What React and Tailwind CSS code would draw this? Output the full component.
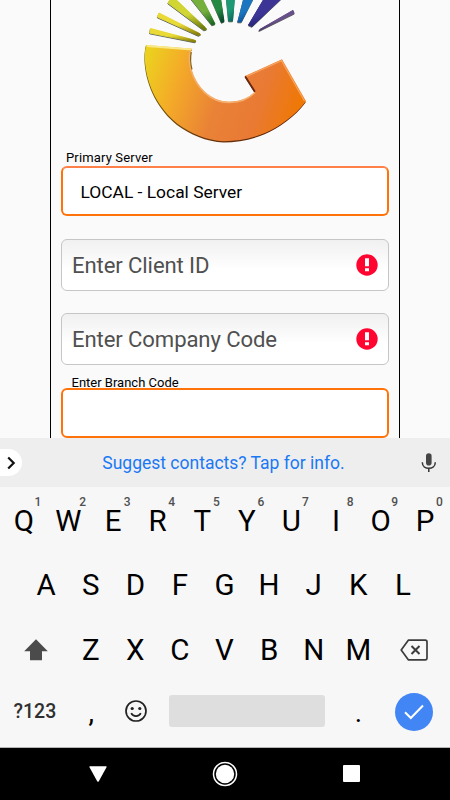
const topRow = [
  ['Q', '1'], ['W', '2'], ['E', '3'], ['R', '4'], ['T', '5'],
  ['Y', '6'], ['U', '7'], ['I', '8'], ['O', '9'], ['P', '0'],
];

const rays = [
  { d: 'M150.5 28.5 L149.8 33 L195 42 L196 41 L194 40 Z', fill: 'url(#yellow)' },
  { d: 'M159 13 L157.5 17 L198.5 35.5 L200.5 34.5 L199 33.2 Z', fill: 'url(#yellow)' },
  { d: 'M171 -2 L168 3 L204 30 L206.5 29.3 L205.5 27.7 L177 0.5 Z', fill: 'url(#lime)' },
  { d: 'M190.5 -2 L212 25 L215 24 L202 -2 Z', fill: 'url(#green)' },
  { d: 'M211 -2 L221.5 22.5 L224 21.5 L220.5 -2 Z', fill: 'url(#forest)' },
  { d: 'M226.5 -2 L228.7 21 L232.5 21 L234.5 -2 Z', fill: 'url(#teal)' },
  { d: 'M244 -2 L237.8 22 L241.3 22 L253.5 -2 Z', fill: 'url(#blue)' },
  { d: 'M264.5 -2 L248.5 25 L252 26.5 L282 -2 Z', fill: 'url(#indigo)' },
  { d: 'M293 10.3 L294.2 13.4 L260 30.3 L259 30.6 L260 29.3 Z', fill: 'url(#purple)' },
];

const gradients = [
  ['yellow', '#e9da35', '#8c8208'],
  ['lime', '#d2d632', '#6c7c0a'],
  ['green', '#76b03c', '#1c6b22'],
  ['forest', '#258a41', '#07482c'],
  ['teal', '#1c9a74', '#06665c'],
  ['blue', '#1a76c0', '#0a3f86'],
  ['indigo', '#3c3596', '#191a66'],
  ['purple', '#69508a', '#2c1a50'],
];

const body =
  'M146 45 L192.3 48.7 C189 53 189.3 63 191.5 69.5 C196 86 210 101.7 229 101.7 C240 101.7 249 98 255 91.7 L245 76 L282 59.3 L306 101.3 C296 115 279 127 265 133 C252 138.5 238 141.2 224 141.2 C207 140.8 190 133 177 123.5 C159 108.5 147 87 145 62 C144.6 56 145 50 146 45 Z';

function Logo() {
  return (
    <svg width="328" height="150" viewBox="61 0 328 150" className="block shrink-0">
      <defs>
        <linearGradient id="body" gradientUnits="userSpaceOnUse" x1="148" y1="55" x2="300" y2="105">
          <stop offset="0" stopColor="#ecd01f" />
          <stop offset="0.22" stopColor="#f4ab28" />
          <stop offset="0.5" stopColor="#e98236" />
          <stop offset="0.75" stopColor="#e97a35" />
          <stop offset="1" stopColor="#ef7805" />
        </linearGradient>
        <linearGradient id="rim" gradientUnits="userSpaceOnUse" x1="145" y1="0" x2="306" y2="0">
          <stop offset="0" stopColor="#6b5a05" />
          <stop offset="0.35" stopColor="#6e360a" />
          <stop offset="1" stopColor="#541a05" />
        </linearGradient>
        {gradients.map(([id, from, to]) => (
          <linearGradient key={id} id={id} x1="0.35" y1="0" x2="0.75" y2="1">
            <stop offset="0" stopColor={from} />
            <stop offset="0.5" stopColor={from} />
            <stop offset="1" stopColor={to} />
          </linearGradient>
        ))}
      </defs>
      {rays.map((r) => (
        <g key={r.d} strokeWidth="1" strokeLinejoin="round">
          <path d={r.d} fill="#23301c" stroke="#23301c" opacity="0.7" transform="translate(-0.2 0.8)" />
          <path d={r.d} fill={r.fill} stroke={r.fill} />
        </g>
      ))}
      <path d={body} fill="url(#rim)" transform="translate(-0.4 1.3)" />
      <path d={body} fill="url(#body)" />
      {/* bevel */}
      <path d="M147 46 L191.5 49.5" stroke="#f8e88a" strokeWidth="1.8" fill="none" />
      <path d="M190.3 51 C188.5 58 190 66 191 70 C196 87 210 102.5 229 102.5 C240 102.5 249 98.7 255 92.5" stroke="#f5b070" strokeWidth="1.5" fill="none" />
      <path d="M191.3 52 C189.8 59 190.8 65 192 69.5" stroke="#85600f" strokeWidth="1.2" fill="none" />
      <path d="M246 76.7 L281.5 60.7 L304.5 101" stroke="#f7a25c" strokeWidth="1.4" fill="none" />
      <path d="M245.2 76.3 L255 91.7" stroke="#6b2811" strokeWidth="1.6" fill="none" />
    </svg>
  );
}

function ErrorField({ label }) {
  return (
    <div className="flex h-[52px] shrink-0 items-center justify-between rounded-[6px] border border-[#c6c6c6] bg-linear-to-b from-[#f0f0f0] to-white to-60% pl-[10px] pr-[10px]">
      <span className="text-[22.1px] leading-none tracking-[-0.1px] text-[#505050]">{label}</span>
      <svg width="22" height="22" viewBox="0 0 22 22">
        <circle cx="11" cy="11" r="10.7" fill="#ff0530" />
        <path d="M9 4.3h4v8H9zM9 14.3h4v3H9z" fill="#fff" />
      </svg>
    </div>
  );
}

function Key({ children, hint }) {
  return (
    <div className="relative flex w-[44.6px] shrink-0 items-center justify-center text-[29.5px] leading-none">
      {children}
      {hint && (
        <span className="absolute left-[33px] top-[-11px] text-[12px] font-medium leading-none text-[#505050]">{hint}</span>
      )}
    </div>
  );
}

export default function App() {
  return (
    <div className="flex h-[800px] w-[450px] flex-col overflow-hidden bg-[#fafafa] font-['Roboto',sans-serif] text-black">
      <div className="mx-[50px] flex h-[438px] shrink-0 flex-col overflow-hidden border-x border-black px-[10px]">
        <Logo />
        <div className="h-[16px] shrink-0 pl-[5px] text-[13px] leading-[16px] tracking-[0.15px]">Primary Server</div>
        <div className="flex h-[50px] shrink-0 items-center rounded-[6px] border-2 border-[#ff730a] border-t-[#ff8048] bg-white pl-[17.5px] pt-[2px] text-[17.4px]">
          LOCAL - Local Server
        </div>
        <div className="mt-[23px] flex flex-col gap-[22px]">
          <ErrorField label="Enter Client ID" />
          <ErrorField label="Enter Company Code" />
        </div>
        <div className="mt-[10px] h-[13px] shrink-0 pl-[10.5px] text-[13px] leading-[16px]">Enter Branch Code</div>
        <div className="relative h-[50px] shrink-0 rounded-[6px] border-2 border-[#ff730a] bg-white" />
      </div>

      <div className="flex h-[49px] shrink-0 items-center justify-between bg-[#eeeeee]">
        <div className="flex h-[27px] w-[22px] items-center rounded-r-full bg-white pl-[6px]">
          <svg width="11" height="14" viewBox="0 0 11 14" fill="none" stroke="#111" strokeWidth="2.2">
            <path d="M2.2 1.5 L7.7 7 L2.2 12.5" />
          </svg>
        </div>
        <span className="pl-[4px] pt-[3px] text-[17.5px] leading-none text-[#1a78f5]">Suggest contacts? Tap for info.</span>
        <svg width="16" height="20" viewBox="0 0 16 20" className="mr-[13px]" fill="none">
          <rect x="5" y="0.3" width="5.6" height="12.2" rx="2.8" fill="#454545" />
          <path d="M1.3 9.3 C1.3 17.3 14.3 17.3 14.3 9.3 M7.8 15.3 V19" stroke="#333" strokeWidth="1.5" />
        </svg>
      </div>

      <div className="flex h-[261px] shrink-0 flex-col border-b border-[#b5b5b5] bg-[#f7f7f7] pr-px">
        <div className="mt-[20px] flex h-[30px] items-center justify-center">
          {topRow.map(([k, n]) => (
            <Key key={k} hint={n}>{k}</Key>
          ))}
        </div>
        <div className="mt-[34px] flex h-[30px] items-center justify-center">
          {'ASDFGHJKL'.split('').map((k) => (
            <Key key={k}>{k}</Key>
          ))}
        </div>
        <div className="mt-[35px] flex h-[30px] items-center justify-center">
          <div className="flex w-[66px] justify-center pb-[3px] pl-px">
            <svg width="24" height="22" viewBox="0 0 24 22">
              <path d="M12 0.2 L23.8 12.3 H18 V21.3 H6 V12.3 H0.2 Z" fill="#4b4b4b" />
            </svg>
          </div>
          {'ZXCVBNM'.split('').map((k) => (
            <Key key={k}>{k}</Key>
          ))}
          <div className="flex w-[66px] justify-center pb-[3px]">
            <svg width="28" height="22" viewBox="0 0 28 22" fill="none" stroke="#3c3c3c">
              <path d="M8.3 1.2 H25.3 Q27 1.2 27 2.9 V19.1 Q27 20.8 25.3 20.8 H8.3 L1.2 11 Z" strokeWidth="1.7" strokeLinejoin="round" />
              <path d="M11.5 7 L19.5 15 M19.5 7 L11.5 15" strokeWidth="2" />
            </svg>
          </div>
        </div>
        <div className="mt-[27px] flex h-[38px] items-center">
          <span className="w-[69px] pl-[13.5px] text-[19.5px] font-medium leading-none text-[#303030]">?123</span>
          <span className="w-[44.6px] pt-[1px] text-center text-[28px] leading-none">,</span>
          <div className="flex w-[44.6px] justify-center pb-[3px]">
            <svg width="22" height="22" viewBox="0 0 22 22" fill="none" stroke="#222" strokeWidth="1.7">
              <circle cx="11" cy="11" r="10" />
              <path d="M6.2 13.2 C8 17 14 17 15.8 13.2" />
              <circle cx="7.2" cy="8.5" r="1.6" fill="#222" stroke="none" />
              <circle cx="14.8" cy="8.5" r="1.6" fill="#222" stroke="none" />
            </svg>
          </div>
          <div className="mb-[2px] ml-[11px] h-[32px] w-[156px] rounded-[3px] bg-[#dedede]" />
          <span className="ml-[11px] w-[44.6px] pt-[1px] text-center text-[28px] leading-none">.</span>
          <div className="ml-[14px] flex size-[38px] items-center justify-center rounded-full bg-[#4285f4]">
            <svg width="20" height="16" viewBox="0 0 20 16" fill="none" stroke="#fff" strokeWidth="2">
              <path d="M1 8.3 L6.8 14 L19 1.5" />
            </svg>
          </div>
        </div>
      </div>

      <div className="flex h-[52px] shrink-0 items-center bg-black pl-[89px]">
        <svg width="18" height="16" viewBox="0 0 18 16">
          <path d="M1 0.2 H17 Q18 0.3 17.5 1.3 L9.8 15.2 Q9 16.3 8.2 15.2 L0.5 1.3 Q0 0.3 1 0.2 Z" fill="#fff" />
        </svg>
        <svg width="26" height="26" viewBox="0 0 26 26" className="mb-px ml-[105px]">
          <circle cx="13" cy="13" r="11.5" fill="none" stroke="#fff" strokeWidth="1.5" />
          <circle cx="13" cy="13" r="9.2" fill="#fff" />
        </svg>
        <div className="mb-px ml-[105px] size-[17px] rounded-[1px] bg-white" />
      </div>
    </div>
  );
}
